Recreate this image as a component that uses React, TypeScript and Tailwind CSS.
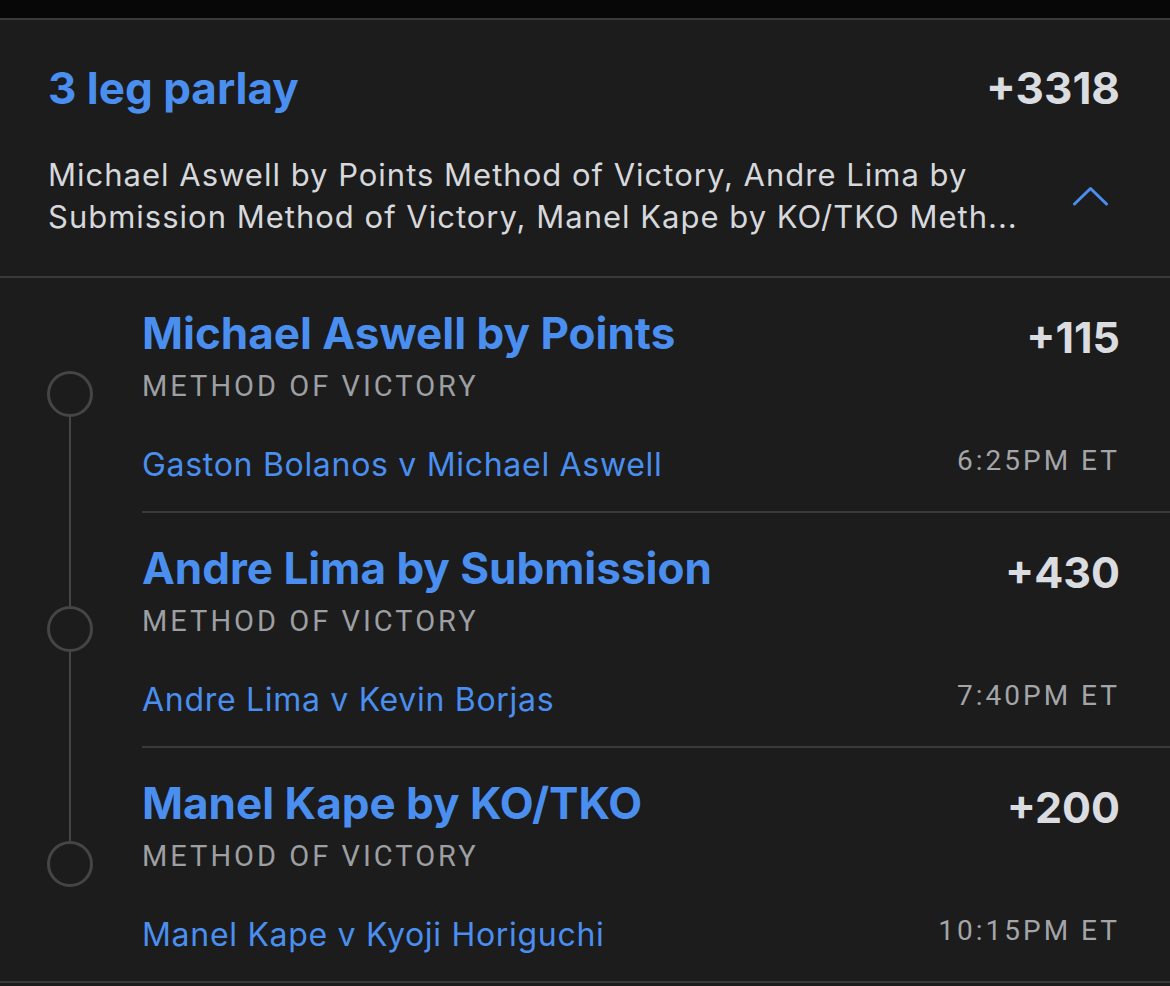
import React from "react";

const legs = [
  { title: "Michael Aswell by Points", odds: "+115", match: "Gaston Bolanos v Michael Aswell", time: "6:25PM ET" },
  { title: "Andre Lima by Submission", odds: "+430", match: "Andre Lima v Kevin Borjas", time: "7:40PM ET" },
  { title: "Manel Kape by KO/TKO", odds: "+200", match: "Manel Kape v Kyoji Horiguchi", time: "10:15PM ET" },
];

function Chevron() {
  return (
    <svg width="36" height="20" viewBox="0 0 36 20" fill="none">
      <path d="M1.5 18 L17.5 2.5 L33.5 18" stroke="#4a8ff0" strokeWidth="3" strokeLinecap="round" strokeLinejoin="round" />
    </svg>
  );
}

export default function App() {
  return (
    <div className="w-[1170px] h-[986px] bg-[#1c1c1c] overflow-hidden" style={{ fontFamily: "Inter, Lato, sans-serif" }}>
      <div className="h-[18px] bg-[#070707]" />
      <div className="border-t-2 border-b-2 border-[#3a3a3c]">
        <div className="px-[48px] pt-[42px] pb-[38px]">
          <div className="flex items-center justify-between">
            <div className="text-[44px] leading-[52px] font-bold text-[#4a8ff0]">3 leg parlay</div>
            <div className="text-[44px] leading-[52px] font-bold text-[#dadce0] pr-[2px]">+3318</div>
          </div>
          <div className="mt-[40px] flex items-center justify-between">
            <div className="text-[31px] leading-[42px] tracking-[1px] text-[#d6d8dc] whitespace-nowrap">
              Michael Aswell by Points Method of Victory, Andre Lima by
              <br />
              Submission Method of Victory, Manel Kape by KO/TKO Meth...
            </div>
            <div className="mr-[13px]">
              <Chevron />
            </div>
          </div>
        </div>
      </div>
      <div className="flex flex-col">
        {legs.map((leg, i) => {
          const last = i === legs.length - 1;
          return (
            <div key={i} className={`flex h-[235px] ${last ? "border-b-2 border-[#3a3a3c]" : ""}`}>
              <div className="w-[142px] flex flex-col items-center pr-[2px]">
                <div className={`w-[2px] h-[93px] ${i === 0 ? "bg-transparent" : "bg-[#454547]"}`} />
                <div className="w-[46px] h-[46px] rounded-full border-[3px] border-[#454547]" />
                <div className={`w-[2px] flex-1 ${last ? "bg-transparent" : "bg-[#454547]"}`} />
              </div>
              <div className={`flex-1 flex flex-col pr-[50px] pt-[25px] ${last ? "" : "border-b-2 border-[#3a3a3c]"}`}>
                <div className="flex items-center justify-between">
                  <div className="text-[44px] leading-[50px] font-bold text-[#4a8ff0]">{leg.title}</div>
                  <div className="text-[43px] leading-[50px] font-bold text-[#dadce0] mt-[9px]">{leg.odds}</div>
                </div>
                <div
                  className="text-[29px] leading-[36px] text-[#9d9fa3] tracking-[3px] mt-[6px]"
                  style={{ fontFamily: "Roboto, 'Liberation Sans', sans-serif" }}
                >
                  METHOD OF VICTORY
                </div>
                <div className="mt-[42px] flex items-center justify-between">
                  <div className="text-[32px] leading-[38px] tracking-[0.7px] text-[#4a8ff0]">{leg.match}</div>
                  <div
                    className="text-[28px] leading-[38px] text-[#a3a5a9] tracking-[3px] -mt-[9px]"
                    style={{ fontFamily: "Roboto, 'Liberation Sans', sans-serif" }}
                  >
                    {leg.time}
                  </div>
                </div>
              </div>
            </div>
          );
        })}
      </div>
    </div>
  );
}
